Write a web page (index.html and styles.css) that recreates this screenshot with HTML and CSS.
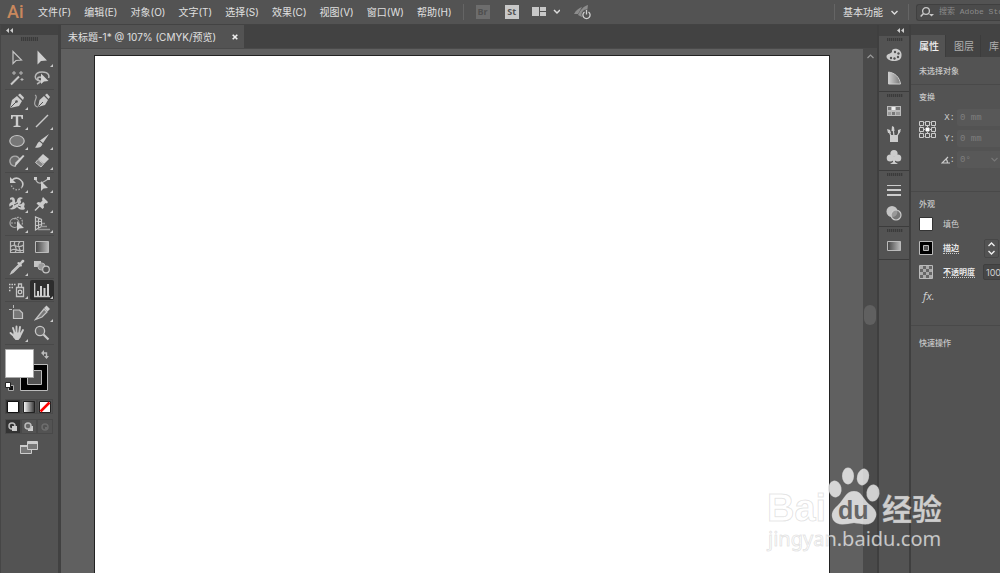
FILE: index.html
```html
<!DOCTYPE html>
<html lang="zh-CN">
<head>
<meta charset="utf-8">
<title>未标题-1</title>
<link rel="stylesheet" href="styles.css">
</head>
<body>
<header class="menubar">
  <span class="logo">Ai</span>
  <nav class="menus">
    <button>文件(F)</button><button>编辑(E)</button><button>对象(O)</button><button>文字(T)</button><button>选择(S)</button><button>效果(C)</button><button>视图(V)</button><button>窗口(W)</button><button>帮助(H)</button>
  </nav>
  <span class="divider"></span>
  <button class="app-badge dim">Br</button>
  <button class="app-badge">St</button>
  <button class="arrange" aria-label="排列文档"><svg width="28" height="12" viewBox="0 0 28 12"><path fill="#c8c8c8" d="M0 1h7v9H0zM8 1h6v4H8zM8 6h6v4H8z"/><path d="M22 4l3 3 3-3" fill="none" stroke="#ddd" stroke-width="1.5"/></svg></button>
  <button class="gpu" aria-label="GPU"><svg width="18" height="16" viewBox="0 0 18 16"><path fill="#8c8c8c" d="M0 10C2 6 5 4 8 3L4 10zM4 11C7 5 10 2 14 1l-1 7-5 5z"/><circle cx="12.500" cy="10.500" r="5" fill="#535353"/><path d="M10.500 8a3.600 3.600 0 1 0 4 0M12.500 6v4.500" fill="none" stroke="#d0d0d0" stroke-width="1.300"/></svg></button>
  <span class="spacer"></span>
  <span class="divider"></span>
  <button class="workspace">基本功能 <svg width="7" height="5" viewBox="0 0 7 5"><path d="M.5 1l3 3 3-3" fill="none" stroke="#ddd" stroke-width="1.400"/></svg></button>
  <span class="divider"></span>
  <label class="search"><svg width="14" height="12" viewBox="0 0 14 12"><circle cx="6" cy="5" r="3.400" fill="none" stroke="#c8c8c8" stroke-width="1.300"/><path d="M3.500 7.500L.7 10.500" stroke="#c8c8c8" stroke-width="1.500"/><path d="M9 8h5l-2.500 2.500z" fill="#c8c8c8"/></svg><input type="text" placeholder="搜索 Adobe Stock" aria-label="搜索 Adobe Stock"></label>
</header>

<main class="workarea">
  <aside class="tools">
    <div class="strip"><svg width="7" height="5" viewBox="0 0 7 5"><path fill="#ccc" d="M3 0v5L0 2.500zM7 0v5L4 2.500z"/></svg></div>
    <div class="grip"></div>
    <div class="tool-group">
      <button class="tool" aria-label="选择"><svg viewBox="0 0 16 16"><path d="M4 1.500v12L7 10.500l5.500-.5z" fill="none" stroke="#c4c4c4" stroke-width="1.200"/></svg></button>
      <button class="tool more" aria-label="直接选择"><svg viewBox="0 0 16 16"><path d="M3.500.5v14L7 11l6-.5z" fill="#d0d0d0"/></svg></button>
      <button class="tool" aria-label="魔棒"><svg viewBox="0 0 16 16"><path d="M2 14.500L10 6.500" stroke="#c8c8c8" stroke-width="2"/><path d="M5 1v4M3 3h4M12 1v4M10 3h4M13 8v3M11.500 9.500h3" stroke="#b8b8b8"/></svg></button>
      <button class="tool" aria-label="套索"><svg viewBox="0 0 16 16"><path d="M6 11C-1 10 0 2 8 2s7 5 6.500 6M6 11c-3-1-3-4 0-4 3 1 3 4-3 7" fill="none" stroke="#b8b8b8" stroke-width="1.500"/><path d="M7 3.500v10.500l3-2.500 4.500-.5z" fill="#d0d0d0"/></svg></button>
    </div>
    <div class="tool-group">
      <button class="tool more" aria-label="钢笔"><svg viewBox="0 0 16 16"><path fill="#ccc" d="M1 15l2-8 5-4 5 5-3 5zM9 2l2-1.500L15 4.500 14 7z"/><path d="M1.500 14.500L7 9" stroke="#535353"/><circle cx="7.500" cy="8.500" r="1.300" fill="#535353"/></svg></button>
      <button class="tool" aria-label="曲率"><svg viewBox="0 0 16 16"><path fill="#ccc" d="M4 14l1.500-7 4.500-4 4 4-3 5zM11 2l2-1.500L16 4l-1.500 2z"/><path d="M4.500 13.500L9 9" stroke="#535353"/><path d="M1 2c4 2-2 6 0 10 1 2 2 2 3 2" fill="none" stroke="#aaa" stroke-width="1.200"/></svg></button>
      <button class="tool more" aria-label="文字"><svg viewBox="0 0 16 16"><path fill="#ccc" d="M2 2h12v4h-1.300L12 3.500H9.200v9l2.300.5v1h-7v-1l2.300-.5v-9H4L3.300 6H2z"/></svg></button>
      <button class="tool more" aria-label="直线段"><svg viewBox="0 0 16 16"><path d="M2 14L14 2" stroke="#c8c8c8" stroke-width="1.400"/></svg></button>
      <button class="tool more" aria-label="椭圆"><svg viewBox="0 0 16 16"><ellipse cx="8" cy="8" rx="7.200" ry="5.500" fill="#777" stroke="#c4c4c4" stroke-width="1.200"/></svg></button>
      <button class="tool more" aria-label="画笔"><svg viewBox="0 0 16 16"><path fill="#ccc" d="M15 1l-6 9-3-2.500zM5.500 8.500l3 2.500c-1 4-5 4-7.500 3.500 2-1.500 2-5 4.500-6z"/></svg></button>
      <button class="tool more" aria-label="Shaper"><svg viewBox="0 0 16 16"><path d="M7 13a5 5 0 1 1 3.500-7" fill="#6b6b6b" stroke="#aaa" stroke-width="1.400"/><path d="M15.500 3L8.500 11l-3 3 1-4.500L14 2z" fill="#d0d0d0"/></svg></button>
      <button class="tool more" aria-label="橡皮擦"><svg viewBox="0 0 16 16"><path fill="#ccc" d="M9 1l6 5-5 5-6-5z"/><path fill="#888" stroke="#ccc" d="M4 6.500L9.500 11 7 14 1.500 9.500z"/></svg></button>
    </div>
    <div class="tool-group">
      <button class="tool more" aria-label="旋转"><svg viewBox="0 0 16 16"><path d="M3 4c6-5 13 2 10 7" fill="none" stroke="#c8c8c8" stroke-width="1.600"/><path d="M13 11c-3 5-10 3-11-3" fill="none" stroke="#aaa" stroke-width="1.400" stroke-dasharray="1.500 1.500"/><path fill="#ccc" d="M1 1v6h6z"/></svg></button>
      <button class="tool more" aria-label="宽度"><svg viewBox="0 0 16 16"><path d="M1 2c2 6 5 7 13 1" fill="none" stroke="#bbb" stroke-width="1.200"/><path fill="#ccc" d="M0 1h3v3H0zM13 1h3v3h-3zM7 5v10l2.500-2.500L14 12z"/></svg></button>
      <button class="tool more" aria-label="变形"><svg viewBox="0 0 16 16"><path fill="#c8c8c8" d="M1 2c3-2 5 0 5 3 0 2 1 2 2 0 0-3 3-5 6-3l-3 2c2 1 1 4-1 4 3 1 3-1 4-2 2 1 2 3 1 4l1 3c-4 2-6 0-8-2-2 2-4 3-8 2 3-1 4-2 4-4-2 0-3 1-3 2-2-2 0-5 2-5C4 4 3 3 1 4z"/><path d="M5 9l4-2M9 10l3 1" stroke="#535353"/></svg></button>
      <button class="tool more" aria-label="操控变形"><svg viewBox="0 0 16 16"><path fill="#ccc" d="M9 1l5 5-1 1.500-1.500-.5L9.500 9l.5 2.500L8.500 13 2.500 7.500 4 6l2.500.5 2-2L8 3z"/><path d="M5.500 10L1 14.500" stroke="#ccc" stroke-width="1.500"/></svg></button>
      <button class="tool more" aria-label="形状生成器"><svg viewBox="0 0 16 16"><circle cx="5.500" cy="7" r="4.500" fill="none" stroke="#aaa" stroke-width="1.200"/><path d="M5 3c5-4 10 0 8 6M2 7h8" fill="none" stroke="#aaa" stroke-width="1.200" stroke-dasharray="2 1"/><path fill="#d0d0d0" d="M8 5v10l2.500-2.500L15 12z"/></svg></button>
      <button class="tool more" aria-label="透视网格"><svg viewBox="0 0 16 16"><path d="M1.500 1v13l6-3.500v-7zM1.500 5l6 .5M1.500 9.500l6-1M4.500 2v10" fill="none" stroke="#c4c4c4" stroke-width="1.200"/><path d="M8 7.500h3M7 10.500h6M4 13.500h12" stroke="#999" stroke-width="1.500"/></svg></button>
    </div>
    <div class="tool-group">
      <button class="tool" aria-label="网格"><svg viewBox="0 0 16 16"><path d="M1.500 2.500h13v11h-13zM6 2.500c-3 4 4 6 0 11M11 2.500c-5 5 2 7 0 11M1.500 8c4-5 7 3 13-2M1.500 12c4-5 7 2 13-1" fill="none" stroke="#bbb" stroke-width="1.200"/></svg></button>
      <button class="tool" aria-label="渐变"><svg viewBox="0 0 16 16"><defs><linearGradient id="g"><stop stop-color="#444"/><stop offset="1" stop-color="#bbb"/></linearGradient></defs><path d="M1.500 2.500h13v11h-13z" fill="url(#g)" stroke="#bbb"/></svg></button>
      <button class="tool more" aria-label="吸管"><svg viewBox="0 0 16 16"><path d="M10 5.500L3 12.500l-1 2 2-1L11 6.500" fill="none" stroke="#c8c8c8" stroke-width="1.300"/><path fill="#ccc" d="M8 4l1.500-1 1.500.5L13 1c2-1 3 1 2 2l-2.500 2 .5 1.500L12 8z"/></svg></button>
      <button class="tool" aria-label="混合"><svg viewBox="0 0 16 16"><path fill="#c4c4c4" d="M0 2h7v6H0z"/><circle cx="7.500" cy="7.500" r="3.600" fill="#999" stroke="#bbb"/><circle cx="12" cy="10.500" r="3.300" fill="#535353" stroke="#c4c4c4" stroke-width="1.200"/></svg></button>
    </div>
    <div class="tool-group">
      <button class="tool more" aria-label="符号喷枪"><svg viewBox="0 0 16 16"><path d="M0 2.500h7M0 5.500h4M0 8.500h2" stroke="#ccc" stroke-width="1.500" stroke-dasharray="1.500 1"/><path d="M7.500 5.500h7v9h-7zM9.500 5V2h3v3" fill="none" stroke="#c4c4c4" stroke-width="1.300"/><circle cx="11" cy="10" r="1.800" fill="none" stroke="#ccc" stroke-width="1.200"/></svg></button>
      <button class="tool more active" aria-label="柱形图"><svg viewBox="0 0 16 16"><path d="M.7 1v13.500H16" fill="none" stroke="#ccc" stroke-width="1.300"/><path fill="#d0d0d0" d="M3 9h2v5H3zM6 4h2v10H6zM9.500 6h2v8h-2zM13 2h2v12h-2z"/></svg></button>
    </div>
    <div class="tool-group">
      <button class="tool" aria-label="画板"><svg viewBox="0 0 16 16"><path d="M0 4.500h3M4.500 0v3" stroke="#bbb"/><path d="M4.500 5v8.500h9V8l-3-3z" fill="#777" stroke="#c4c4c4" stroke-width="1.200"/></svg></button>
      <button class="tool more" aria-label="切片"><svg viewBox="0 0 16 16"><path d="M1.500 14.500L10 4l3 3-5 5z" fill="#777" stroke="#c4c4c4" stroke-width="1.200"/><path fill="#ccc" d="M10 3l2.500-2.500L16 4l-2.500 2.500z"/></svg></button>
      <button class="tool more" aria-label="抓手"><svg viewBox="0 0 16 16"><path d="M4 3l2 6M7.500 1.500V8M11 2l-1 7M14 5l-3 6M1.500 8L6 12" stroke="#ccc" stroke-width="1.900" stroke-linecap="round"/><path fill="#ccc" d="M4.500 7.500h7.500l-.5 5-2 2.500H6.500L4 12z"/></svg></button>
      <button class="tool" aria-label="缩放"><svg viewBox="0 0 16 16"><circle cx="6" cy="6" r="4.600" fill="#666" stroke="#c8c8c8" stroke-width="1.300"/><path d="M9.500 9.500l5 5" stroke="#c8c8c8" stroke-width="2.200"/></svg></button>
    </div>
    <button class="paint" aria-label="填色和描边"><svg width="46" height="46" viewBox="0 0 46 46"><path fill="#000" stroke="#bbb" d="M15.500 16.500h27v26h-27z"/><path fill="#535353" stroke="#bbb" d="M22.500 22.500h14v14h-14z"/><path fill="#fff" stroke="#aaa" d="M.5 1.500h28v28H.5z"/><path d="M38 5h3.500v5" fill="none" stroke="#bbb" stroke-width="1.400"/><path fill="#bbb" d="M39 2v6l-3-3zM39 8h5l-2.500 3z"/><path fill="#111" stroke="#aaa" d="M3.500 37.500h5v5h-5z"/><path fill="#fff" stroke="#222" d="M.5 34.500h5v5h-5z"/></svg></button>
    <div class="modes">
      <button class="on" aria-label="颜色"><svg width="12" height="12"><path fill="#fff" stroke="#111" d="M.5.500h11v11H.5z"/></svg></button>
      <button aria-label="渐变填充"><svg width="12" height="12"><defs><linearGradient id="w"><stop stop-color="#fff"/><stop offset="1" stop-color="#333"/></linearGradient></defs><path fill="url(#w)" stroke="#222" d="M.5.500h11v11H.5z"/></svg></button>
      <button aria-label="无"><svg width="12" height="12"><path fill="#fff" stroke="#222" d="M.5.500h11v11H.5z"/><path d="M1.500 10.500l9-9" stroke="#f00" stroke-width="2.500"/></svg></button>
    </div>
    <div class="modes">
      <button class="on" aria-label="正常绘图"><svg width="12" height="12"><circle cx="5" cy="5" r="3" fill="none" stroke="#bbb" stroke-width="1.500"/><path fill="#ccc" d="M5 5h5v5H5z"/></svg></button>
      <button aria-label="背面绘图"><svg width="12" height="12"><path fill="#ccc" d="M5 5h5v5H5z"/><circle cx="5" cy="5" r="3" fill="#666" stroke="#bbb" stroke-width="1.500"/></svg></button>
      <button aria-label="内部绘图"><svg width="12" height="12"><circle cx="6" cy="6" r="3" fill="none" stroke="#6d6d6d" stroke-width="1.500"/><path fill="#6d6d6d" d="M6 6h2v2H6z"/></svg></button>
    </div>
    <button class="screen" aria-label="屏幕模式"><svg width="18" height="14" viewBox="0 0 18 14"><path fill="#777" stroke="#ccc" d="M.5 4.500h11v8H.5z"/><path stroke="#ccc" stroke-width="2" d="M0 5h7"/><path fill="#777" stroke="#ccc" d="M7.500.5h10v8h-10z"/><path stroke="#ccc" stroke-width="2" d="M7 2h11"/></svg></button>
  </aside>

  <section class="document">
    <div class="tabs"><div class="tab"><span>未标题-1* @ 107% (CMYK/预览)</span><button aria-label="关闭"><svg width="6" height="6" viewBox="0 0 6 6"><path d="M.7.700l4.600 4.600M5.300.700L.7 5.300" stroke="#f0f0f0" stroke-width="1.600"/></svg></button></div></div>
    <div class="view">
      <div class="pasteboard"><div class="artboard"></div></div>
      <div class="scroll"><svg width="7" height="5" viewBox="0 0 7 5"><path d="M.5 4l3-3 3 3" fill="none" stroke="#999" stroke-width="1.200"/></svg><span class="thumb"></span></div>
    </div>
  </section>

  <aside class="dock">
    <div class="strip end"><svg width="7" height="5" viewBox="0 0 7 5"><path fill="#ccc" d="M3 0v5L0 2.500zM7 0v5L4 2.500z"/></svg></div>
    <div class="dock-group">
      <button aria-label="颜色面板"><svg viewBox="0 0 16 16"><path fill="#ccc" d="M6 5c-1-5 9-4 9.500 2S12 14 8 14 .500 12 .500 9.500 4 7 6 5z"/><g fill="#535353"><circle cx="9" cy="5" r="1.200"/><circle cx="12.500" cy="6.500" r="1.200"/><circle cx="12" cy="10" r="1.200"/><circle cx="8.500" cy="11.500" r="1.200"/><circle cx="5" cy="11" r="1.200"/></g></svg></button>
      <button aria-label="颜色参考"><svg viewBox="0 0 16 16"><defs><linearGradient id="s"><stop stop-color="#d0d0d0"/><stop offset="1" stop-color="#777"/></linearGradient></defs><path fill="url(#s)" stroke="#ccc" d="M2.500 2v12h12C13.500 7 9 3 2.500 2z"/></svg></button>
    </div>
    <div class="dock-group">
      <button aria-label="色板"><svg viewBox="0 0 16 16"><path fill="#bbb" d="M1 3h14v10H1z"/><path fill="#777" d="M2 4h3v3H2zM10 4h4v3h-4zM6 9h3v3H6z"/><path fill="#eee" d="M6 4h3v3H6z"/><path fill="#999" d="M2 9h3v3H2zM10 9h4v3h-4z"/></svg></button>
      <button aria-label="画笔面板"><svg viewBox="0 0 16 16"><path fill="#ccc" d="M4 9h8v7H4z"/><path d="M5 10L2.500 4M8 10L7 2M11 10l3-5" stroke="#ccc" stroke-width="1.300"/><path fill="#ccc" d="M1 3l3 1 1 3-3 0zM6 0l2 1 .500 4h-3zM12 4l3-1-1 3-2 2z"/></svg></button>
      <button aria-label="符号"><svg viewBox="0 0 16 16"><g fill="#ccc"><circle cx="8" cy="4.500" r="3.600"/><circle cx="4.200" cy="9" r="3.500"/><circle cx="11.800" cy="9" r="3.500"/><path d="M7 8h2v5l3 2H4l3-2z"/></g></svg></button>
    </div>
    <div class="dock-group">
      <button aria-label="描边面板"><svg viewBox="0 0 16 16"><path fill="#ccc" d="M1 3h14v1H1zM1 7h14v2H1zM1 12h14v2H1z"/></svg></button>
      <button aria-label="透明度"><svg viewBox="0 0 16 16"><circle cx="6" cy="6.500" r="5.500" fill="#c4c4c4"/><circle cx="10" cy="10" r="5" fill="#888" fill-opacity=".7" stroke="#ccc" stroke-width="1.200"/></svg></button>
    </div>
    <div class="dock-group">
      <button aria-label="渐变面板"><svg viewBox="0 0 16 16"><path d="M1.500 3.500h13v9h-13z" fill="url(#g)" stroke="#bbb"/></svg></button>
    </div>
  </aside>

  <aside class="properties">
    <div class="strip"></div>
    <div class="prop-tabs"><button class="current">属性</button><button>图层</button><button>库</button></div>
    <section class="none"><h2>未选择对象</h2></section>
    <section class="transform">
      <h2>变换</h2>
      <div class="transform-body">
        <svg width="17" height="17" viewBox="0 0 17 17" fill="none" stroke="#ccc"><path d="M1.500 1.500h14v14h-14zM8.500 1v15M1 8.500h15" stroke-dasharray="1 1"/><g fill="#535353"><path d="M.5.500h4v4h-4zM6.500.500h4v4h-4zM12.500.500h4v4h-4zM.5 6.500h4v4h-4zM12.500 6.500h4v4h-4zM.5 12.500h4v4h-4zM6.500 12.500h4v4h-4zM12.500 12.500h4v4h-4z"/></g><path fill="#fff" stroke="#fff" d="M7 7h3v3H7z"/></svg>
        <div class="fields">
          <label for="x">X:</label><input id="x" value="0 mm" disabled>
          <label for="y">Y:</label><input id="y" value="0 mm" disabled>
          <label for="a" aria-label="角度"><svg width="9" height="8" viewBox="0 0 9 8"><path d="M9 7H1l6-6M5 3c1 1 1.500 2 1.500 4" fill="none" stroke="#ccc" stroke-width="1.200"/></svg>:</label><div class="angle"><input id="a" value="0°" disabled><svg width="7" height="5" viewBox="0 0 7 5"><path d="M.5 1l3 3 3-3" fill="none" stroke="#777" stroke-width="1.200"/></svg></div>
        </div>
      </div>
    </section>
    <section class="appearance">
      <h2>外观</h2>
      <div class="row"><svg width="14" height="14"><path fill="#fff" stroke="#333" d="M.5.500h13v13H.5z"/></svg><span>填色</span></div>
      <div class="row"><svg width="14" height="14"><path fill="#000" stroke="#bbb" d="M.5.500h13v13H.5z"/><path fill="#535353" stroke="#bbb" d="M4.500 4.500h5v5h-5z"/></svg><button class="link">描边</button><span class="stepper"><button aria-label="增加"><svg width="7" height="5" viewBox="0 0 7 5"><path d="M.5 4l3-3 3 3" fill="none" stroke="#eee" stroke-width="1.400"/></svg></button><button aria-label="减少"><svg width="7" height="5" viewBox="0 0 7 5"><path d="M.5 1l3 3 3-3" fill="none" stroke="#eee" stroke-width="1.400"/></svg></button></span></div>
      <div class="row"><svg width="14" height="14"><path fill="#666" stroke="#bbb" d="M.5.500h13v13H.5z"/><path fill="#aaa" d="M1 1h3v3H1zM7 1h3v3H7zM4 4h3v3H4zM10 4h3v3h-3zM1 7h3v3H1zM7 7h3v3H7zM4 10h3v3H4zM10 10h3v3h-3z"/></svg><button class="link">不透明度</button><input class="opacity" value="100%" aria-label="不透明度"></div>
      <div class="row"><button class="fx">fx.</button></div>
    </section>
    <section class="quick"><h2>快速操作</h2></section>
  </aside>
</main>

<div class="watermark">
  <svg width="190" height="90" viewBox="0 0 190 90">
    <g fill="#fff" fill-opacity=".74" stroke="#777" stroke-opacity=".2">
      <text class="wm-bai" x="2" y="55">Bai</text>
      <ellipse cx="70" cy="23" rx="6.500" ry="8.500" transform="rotate(-10 70 23)"/>
      <ellipse cx="83" cy="10" rx="6" ry="8.500"/>
      <ellipse cx="98" cy="11" rx="6" ry="8.500" transform="rotate(14 98 11)"/>
      <ellipse cx="108" cy="27" rx="6.500" ry="8.500" transform="rotate(6 108 27)"/>
      <path d="M89 25c8 0 9 8 15 13 7 5 9 10 6 15-4 8-13 5-21 4-8 1-16 4-21-3-3-6 0-11 5-15 6-6 8-14 16-14z"/>
      <text class="wm-cn" x="117" y="54">经验</text>
      <text class="wm-url" x="3" y="80">jingyan.baidu.com</text>
    </g>
    <text class="wm-du" x="73" y="53">du</text>
  </svg>
</div>
</body>
</html>
```
FILE: styles.css
```css
* { box-sizing: border-box; }
body {
  margin: 0;
  height: 100vh;
  overflow: hidden;
  display: flex;
  flex-direction: column;
  background: #535353;
  color: #e0e0e0;
  font: 10px/14px Inter, "Noto Sans CJK SC", sans-serif;
}
button, input { font: inherit; color: inherit; background: none; border: 0; padding: 0; margin: 0; }
svg { display: block; flex: none; }
h2 { margin: 0; font-size: 8px; line-height: 12px; font-weight: 500; color: #c8c8c8; }

.menubar { flex: none; height: 25px; display: flex; align-items: center; padding-left: 7px; border-bottom: 1px solid #434343; white-space: nowrap; overflow: hidden; }
.logo { width: 31px; color: #c9885d; font: 500 18px/22px Roboto, sans-serif; }
.menus { display: flex; gap: 13px; }
.divider { flex: none; width: 1px; height: 16px; background: #656565; }
.menus + .divider { margin: 0 12px 0 11px; }
.app-badge { flex: none; width: 14px; height: 14px; background: #c8c8c8; color: #535353; font: bold 9px/14px "Open Sans", sans-serif; margin-right: 15px; }
.app-badge.dim { background: #6d6d6d; color: #505050; }
.arrange { margin: 0 14px 0 -2px; }
.spacer { flex: 1; }
.workspace { display: flex; align-items: center; gap: 8px; padding: 0 10px 0 8px; }
.search { flex: none; width: 84px; margin-left: 7px; height: 17px; display: flex; align-items: center; gap: 5px; padding-left: 3px; border: 1px solid #404040; border-right: 0; border-radius: 3px 0 0 3px; background: #4b4b4b; }
.search input { min-width: 0; flex: 1; font: 8px/12px "Liberation Mono", "Noto Sans CJK SC", monospace; }
.search input::placeholder { color: #8a8a8a; opacity: 1; }

.workarea { flex: 1; min-height: 0; display: flex; }
.strip { flex: none; height: 10px; display: flex; align-items: center; padding-left: 5px; background: #434343; }
.strip.end { justify-content: flex-end; padding-right: 5px; }

.tools { flex: none; width: 61px; display: flex; flex-direction: column; border-left: 1px solid #464646; border-right: 3px solid #414141; }
.grip { flex: none; width: 17px; height: 4px; margin: 2px auto 7px 20px; background: repeating-linear-gradient(90deg, #3b3b3b 0 1px, #4b4b4b 1px 2px); }
.tool-group { flex: none; display: grid; grid-template-columns: 24px 24px; column-gap: 1px; margin: 0 4px; padding-bottom: 1px; border-bottom: 1px solid #494949; margin-bottom: 1px; }
.tool { position: relative; height: 20px; display: grid; place-items: center; border-radius: 2px; }
.tool svg { width: 16px; height: 16px; }
.tool.more::after { content: ""; position: absolute; right: 1px; bottom: 1px; border-left: 3px solid transparent; border-bottom: 3px solid #c8c8c8; }
.tool.active { background: #2d2d2d; }
.paint { flex: none; width: 46px; margin: 2px 0 3px 4px; }
.modes { flex: none; display: flex; width: 48px; margin: 2px 0 3px 4px; }
.modes button { flex: 1; height: 15px; display: grid; place-items: center; border: 1px solid #494949; }
.modes .on { background: #333; }
.screen { width: 18px; margin: 4px 0 0 19px; }

.document { flex: 1; min-width: 0; display: flex; flex-direction: column; }
.tabs { flex: none; height: 24px; display: flex; background: #424242; border-bottom: 1px solid #4a4a4a; }
.tab { display: flex; align-items: center; gap: 16px; padding: 0 6px 0 7px; background: #535353; white-space: nowrap; }
.view { flex: 1; min-height: 0; display: flex; background: #606060; }
.pasteboard { flex: 1; display: flex; padding: 6px 33px 0; }
.artboard { flex: 1; background: #fff; border: 1px solid #222; border-bottom: 0; }
.scroll { width: 14px; display: flex; flex-direction: column; align-items: center; padding-top: 5px; background: #4a4a4a; }
.thumb { width: 12px; height: 20px; margin-top: 246px; border-radius: 6px; background: #606060; }

.dock { flex: none; width: 34px; border-left: 2px solid #3f3f3f; border-right: 2px solid #3f3f3f; }
.dock .strip { height: 11px; }
.dock-group { position: relative; padding: 7px 0 2px; border-bottom: 1px solid #3c3c3c; }
.dock-group::before { content: ""; position: absolute; left: 8px; top: 2px; width: 16px; height: 3px; background: repeating-linear-gradient(90deg, #3b3b3b 0 1px, #4b4b4b 1px 2px); }
.dock-group button { width: 100%; height: 23px; display: grid; place-items: center; }
.dock-group svg { width: 16px; height: 16px; }

.properties { flex: none; width: 89px; overflow: hidden; white-space: nowrap; }
.prop-tabs { display: flex; height: 22px; background: #434343; color: #b0b0b0; }
.prop-tabs button { flex: none; padding: 0 6px 0 8px; border-right: 1px solid #3c3c3c; }
.prop-tabs .current { background: #535353; color: #f0f0f0; font-weight: 500; }
.properties section { padding: 6px 0 0 8px; border-bottom: 1px solid #494949; }
.none { height: 28px; }
.properties .none { padding-top: 8px; }
.transform { height: 107px; }
.transform-body { display: flex; gap: 7px; margin-top: 6px; }
.transform-body > svg { margin-top: 12px; }
.fields { display: grid; grid-template-columns: 12px 50px; gap: 4px 2px; align-items: center; font: 9px/12px "Liberation Mono", monospace; }
.fields label { display: flex; justify-content: flex-end; align-items: center; color: #ccc; }
.fields input { width: 100%; height: 17px; padding-left: 3px; color: #7f7f7f; background: #585858; border-radius: 2px; }
.angle { display: flex; align-items: center; background: #585858; border-radius: 2px; }
.angle input { width: 34px; }
.appearance { height: 134px; }
.row { display: flex; align-items: center; gap: 10px; height: 24px; font-size: 8px; line-height: 10px; color: #d0d0d0; }
.appearance h2 + .row { margin-top: 2px; }
.link { font-weight: 700; border-bottom: 1px dotted #ccc; color: #e8e8e8; }
.stepper { display: grid; gap: 3px; margin-left: 15px; padding: 2px 3px; border: 1px solid #474747; border-radius: 2px; }
.opacity { width: 40px; height: 16px; margin-left: -2px; padding-left: 2px; font-size: 9px; background: #474747; border: 1px solid #3f3f3f; border-radius: 2px; }
.fx { margin-left: 4px; font: italic 11px/14px "Open Sans", sans-serif; }
.properties .quick { padding-top: 11px; border: 0; }

.watermark { position: absolute; right: 45px; bottom: 17px; width: 190px; height: 90px; pointer-events: none; }
.wm-bai { font: bold 38px "Liberation Sans", sans-serif; }
.wm-cn { font: bold 30px "Noto Sans CJK SC", sans-serif; }
.wm-url { font: 20px "Noto Sans", sans-serif; }
.wm-du { font: bold 25px "Liberation Sans", sans-serif; fill: #666; }
```
